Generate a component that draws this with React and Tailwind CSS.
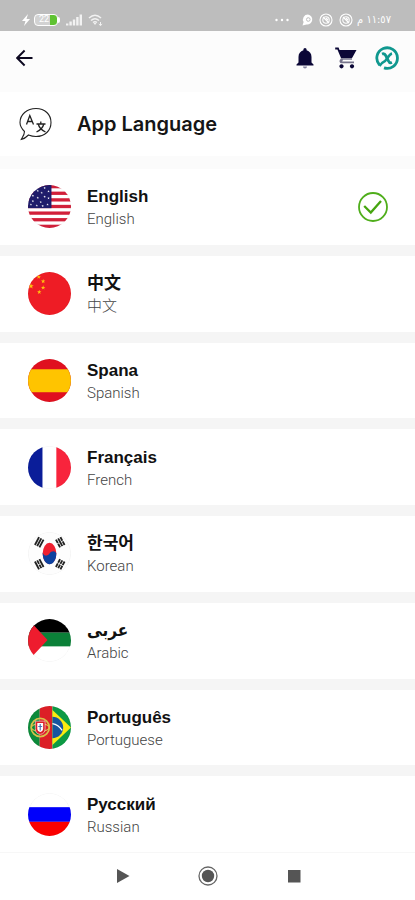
import React, { useState } from 'react';

const languages = [
  { code: 'us', name: 'English', label: 'English' },
  { code: 'cn', name: '中文', label: '中文' },
  { code: 'es', name: 'Spana', label: 'Spanish' },
  { code: 'fr', name: 'Français', label: 'French' },
  { code: 'kr', name: '한국어', label: 'Korean' },
  { code: 'ps', name: 'عربى', label: 'Arabic' },
  { code: 'pt', name: 'Português', label: 'Portuguese' },
  { code: 'ru', name: 'Русский', label: 'Russian' },
];

const STAR = 'M0 -1 L.24 -.31 L.95 -.31 L.38 .12 L.59 .81 L0 .4 L-.59 .81 L-.38 .12 L-.95 -.31 L-.24 -.31 Z';

const Star = ({ x, y, r, fill }) => (
  <path d={STAR} fill={fill} transform={`translate(${x} ${y}) scale(${r})`} />
);

const UsFlag = () => (
  <>
    <rect width="44" height="44" fill="#fff" />
    {[0, 1, 2, 3, 4, 5, 6].map((i) => (
      <rect key={i} y={i * 6.77} width="44" height="3.38" fill="#d2203a" />
    ))}
    <rect width="24" height="23.7" fill="#1f1c6b" />
    {[
      [17, 3], [10, 6], [21, 6.5], [14, 8], [5, 11], [10, 13], [17, 12],
      [21, 13.5], [5, 16.5], [13, 17.5], [20, 20], [9, 21], [3, 20], [15, 21.5],
    ].map(([x, y]) => (
      <Star key={`${x}-${y}`} x={x} y={y} r={1.3} fill="#fff" />
    ))}
  </>
);

const CnFlag = () => (
  <>
    <rect width="44" height="44" fill="#ee1c25" />
    <Star x={3} y={14.5} r={3} fill="#ffc20e" />
    <Star x={11} y={5} r={2.4} fill="#ffc20e" />
    <Star x={15.5} y={9.5} r={2.4} fill="#ffc20e" />
    <Star x={15.5} y={16} r={2.4} fill="#ffc20e" />
    <Star x={11.5} y={20.5} r={2.4} fill="#ffc20e" />
  </>
);

const EsFlag = () => (
  <>
    <rect width="44" height="44" fill="#e0101f" />
    <rect y="10.5" width="44" height="23.5" fill="#ffc400" />
  </>
);

const FrFlag = () => (
  <>
    <rect width="44" height="44" fill="#fff" />
    <rect width="14.8" height="44" fill="#0a1d99" />
    <rect x="29" width="15" height="44" fill="#f8243c" />
  </>
);

const Trigram = ({ x, y, angle, broken }) => (
  <g transform={`translate(${x} ${y}) rotate(${angle})`} stroke="#222" strokeWidth="1.9">
    {[-2.6, 0, 2.6].map((dy, i) => (
      <path key={dy} d={broken.includes(i) ? `M-4.5 ${dy} H-.4 M.4 ${dy} H4.5` : `M-4.5 ${dy} H4.5`} />
    ))}
  </g>
);

const KrFlag = () => (
  <>
    <rect width="44" height="44" fill="#fdfdfd" />
    <ellipse cx="22" cy="22" rx="7" ry="11" fill="#ee1f2f" />
    <path d="M15 21 C16 25 20 25 22 22 S28 19 29 22 C29 28 26 33 22 33 S15 28 15 21 Z" fill="#0c419f" />
    <Trigram x={11.5} y={10.5} angle={-62} broken={[]} />
    <Trigram x={33} y={10.5} angle={62} broken={[0, 2]} />
    <Trigram x={11.5} y={33} angle={62} broken={[1]} />
    <Trigram x={33} y={33} angle={-62} broken={[0, 1, 2]} />
  </>
);

const PsFlag = () => (
  <>
    <rect width="44" height="44" fill="#fff" />
    <rect width="44" height="14" fill="#000" />
    <rect y="14" width="44" height="14" fill="#0b8038" />
    <path d="M0 0 L20 21.5 L0 43 Z" fill="#ee1c2e" />
  </>
);

const PtFlag = () => (
  <>
    <rect width="12" height="44" fill="#0c8a3a" />
    <rect x="12" width="13" height="44" fill="#dc1f26" />
    <rect x="25" width="19" height="44" fill="#0c9a44" />
    <path d="M25 4 L44 22 L25 40 Z" fill="#fbea10" />
    <path d="M25 11 A11 11 0 0 1 25 33 Z" fill="#17559f" />
    <path d="M25 18 Q31 19 35 25" fill="none" stroke="#fff" strokeWidth="1.4" />
    <circle cx="12.5" cy="22" r="9.3" fill="none" stroke="#d9c04a" strokeWidth="1.8" />
    <ellipse cx="12.5" cy="22" rx="9" ry="4" fill="none" stroke="#d9c04a" strokeWidth="1.1" />
    <path d="M7.5 15.5 H17.5 V23 Q17.5 28.5 12.5 29 Q7.5 28.5 7.5 23 Z" fill="#dc1f26" stroke="#f3d8d8" strokeWidth=".7" />
    <path d="M9.5 17.5 H15.5 V23 Q15.5 26 12.5 26.5 Q9.5 26 9.5 23 Z" fill="#fff" />
    <path d="M12.5 18.5 V25 M10.5 21 H14.5" stroke="#4d74b5" strokeWidth="1.2" />
  </>
);

const RuFlag = () => (
  <>
    <rect width="44" height="44" fill="#fff" />
    <rect y="14.5" width="44" height="15" fill="#0000fb" />
    <rect y="29.5" width="44" height="15" fill="#fb0000" />
  </>
);

const flags = {
  us: UsFlag,
  cn: CnFlag,
  es: EsFlag,
  fr: FrFlag,
  kr: KrFlag,
  ps: PsFlag,
  pt: PtFlag,
  ru: RuFlag,
};

const Flag = ({ code }) => {
  const Art = flags[code];
  return (
    <svg viewBox="0 0 44 44" className="w-[43px] h-[43px] shrink-0 rounded-full" aria-hidden="true">
      <Art />
      <circle cx="22" cy="22" r="21.7" fill="none" stroke="#000" strokeOpacity=".07" strokeWidth=".6" />
    </svg>
  );
};

const Headphone = () => (
  <svg viewBox="0 0 14 14" className="w-3.5 h-3.5" fill="none" stroke="#fff" strokeWidth="1.1" aria-hidden="true">
    <circle cx="7" cy="7" r="6" />
    <circle cx="7" cy="7" r="3.2" />
    <path d="M4 4 L10 10 M7 5 L9 7" />
  </svg>
);

const StatusBar = () => (
  <div className="flex h-[31px] items-center justify-between bg-[#bdbdbd] pl-[22px] pr-6 pt-2">
    <div className="flex items-center gap-1">
      <svg viewBox="0 0 8 12" className="w-2 h-3" fill="#fff" aria-hidden="true">
        <path d="M6 0 L0 7 H3.5 L2 12 L8 5 H4.5 Z" />
      </svg>
      <div className="flex items-center">
        <div className="flex h-3 w-6 items-center justify-end rounded-sm border border-white bg-[linear-gradient(to_right,#d2d2d2_66%,#5fc232_66%)]">
          <span className="w-full pl-1 font-[Roboto] text-[9px] leading-none text-white">22</span>
        </div>
        <div className="h-1.5 w-0.5 rounded-r-sm bg-white"></div>
      </div>
      <svg viewBox="0 0 16 11" className="ml-0.5 w-4 h-3" fill="#f2f2f2" aria-hidden="true">
        <path d="M0 9 H2.4 V11 H0Z M3.4 7 H5.8 V11 H3.4Z M6.8 5 H9.2 V11 H6.8Z M10.2 2.5 H12.6 V11 H10.2Z M13.6 0 H16 V11 H13.6Z" />
      </svg>
      <svg viewBox="0 0 16 12" className="ml-0.5 w-4 h-3" fill="none" stroke="#f2f2f2" strokeWidth="1.5" aria-hidden="true">
        <path d="M1 4 Q7 -1.5 13 4 M3 6.5 Q7 3 11 6.5 M5 8.5 Q7 7 9 8.5" />
        <path d="M7 11 L5.5 9 H8.5 Z" fill="#f2f2f2" stroke="none" />
        <path d="M12.5 8 V11.5 M10.8 10 L12.5 11.6 L14.2 10" strokeWidth="1" />
      </svg>
    </div>
    <div className="flex items-center gap-1">
      <svg viewBox="0 0 14 4" className="mr-2 w-3.5 h-1" fill="#fff" aria-hidden="true">
        <circle cx="1.5" cy="2" r="1.2" />
        <circle cx="7" cy="2" r="1.2" />
        <circle cx="12.5" cy="2" r="1.2" />
      </svg>
      <svg viewBox="0 0 14 14" className="w-3.5 h-3.5" aria-hidden="true">
        <path d="M7 1.5 A5 5 0 1 1 5.5 11.4 L1.5 12.5 L2.6 9 A5 5 0 0 1 7 1.5Z" fill="#fff" />
        <circle cx="7.3" cy="6.5" r="1.8" fill="none" stroke="#bdbdbd" />
      </svg>
      <div className="flex gap-1.5">
        <Headphone />
        <Headphone />
      </div>
      <span dir="rtl" className="font-['DejaVu_Sans_Condensed','DejaVu_Sans',sans-serif] text-[11px] leading-4 text-white">١١:٥٧ م</span>
    </div>
  </div>
);

const Header = () => (
  <header className="flex h-[61px] items-center justify-between bg-[#fcfcfc] px-4 pb-2">
    <button type="button" aria-label="Back">
      <svg viewBox="0 0 18 18" className="w-[18px] h-[18px]" fill="none" stroke="#0c0820" strokeWidth="1.9" aria-hidden="true">
        <path d="M16.5 9 H1.5 M8.6 1.5 L1.2 9 L8.6 16.5" />
      </svg>
    </button>
    <div className="flex items-center gap-[17px]">
      <button type="button" aria-label="Notifications">
        <svg viewBox="0 0 24 24" className="w-6 h-6" fill="#0b0736" aria-hidden="true">
          <path d="M12 22.5 c1.1 0 2-.9 2-2 h-4 c0 1.1.9 2 2 2z" fill="#8583a0" />
          <path d="M18.5 16.5 v-5.5 c0-3.3-1.8-6-4.9-6.7 V3.5 a1.6 1.6 0 0 0-3.2 0 v.8 C7.3 5 5.5 7.7 5.5 11 v5.5 l-2 1.900 v1.200 h17 v-1.200z" />
        </svg>
      </button>
      <button type="button" aria-label="Cart">
        <svg viewBox="0 0 24 24" className="w-6 h-6" fill="#0b0736" aria-hidden="true">
          <path d="M7.5 18.2 a2.1 2.1 0 1 0 .01 0z M18 18.2 a2.1 2.1 0 1 0 .01 0z" />
          <path d="M1.2 1.5 v2 h2.2 l3.7 8.8 h9.6 c.8 0 1.5-.5 1.8-1.1 L22.500 4.100 H5.500 L4.600 1.500z" />
          <path d="M7 12.300 L5.700 14.200 C5 15.600 6 17.200 7.500 17.200 H20 V15.500 H8.200 L9 13.800 H18 V12.300z" fill="#77758c" />
        </svg>
      </button>
      <button type="button" aria-label="Account">
        <svg viewBox="0 0 24 24" className="w-6 h-6" fill="none" stroke="#10988f" aria-hidden="true">
          <path d="M4.500 19 A10.300 10.300 0 1 1 9 21.900" strokeWidth="2.800" />
          <path d="M7 8 Q9.500 7 11 10 L13.500 15 Q14.500 17.500 17 16.500" strokeWidth="2.800" />
          <path d="M17 7.500 Q15 8 12.500 12 T7 17 L4.500 20" strokeWidth="2.400" />
        </svg>
      </button>
    </div>
  </header>
);

const LanguageIcon = () => (
  <svg viewBox="0 0 34 34" className="w-[34px] h-[34px]" fill="none" stroke="#222" strokeWidth="1.1" aria-hidden="true">
    <path d="M5.5 24.5 C2.5 21.5 1 18.5 1 15.5 C1 7.5 8 1.5 17 1.5 S32 7.500 32 15.500 S26 29.500 17 29.500 C14.500 29.500 12 29 9.500 28 C7.500 30 5 32 2.200 32.500 C2.500 31.500 5.500 28.500 5.500 24.500 Z" />
    <path d="M7.500 17.500 L10.800 8.500 L14.500 17.500 M8.600 14.500 H13.300" strokeWidth="1.300" />
    <path d="M17.500 17 H26.500 M21.800 14.500 V17 M24.800 17 C24 20.500 21.500 23 17.500 25 M19.300 17 C20 20.500 22.500 23 26.500 25" strokeWidth="1.300" />
  </svg>
);

const CheckMark = () => (
  <svg viewBox="0 0 30 30" className="ml-auto w-[30px] h-[30px] shrink-0" aria-hidden="true">
    <circle cx="15" cy="15" r="14" fill="none" stroke="#4fae1b" strokeWidth="1.8" />
    <path d="M6.200 14 L12.800 20.500 L23 9" fill="none" stroke="#45a50f" strokeWidth="2.300" />
  </svg>
);

const LanguageRow = ({ language, selected, onSelect }) => (
  <li className="flex flex-1 bg-white">
    <button
      type="button"
      aria-pressed={selected}
      onClick={onSelect}
      className="flex w-full items-center gap-4 pl-7 pr-[27px] text-left"
    >
      <Flag code={language.code} />
      <span className="flex flex-col pt-0.5">
        <span className="h-[23px] font-['Liberation_Sans','Noto_Sans_CJK_SC','DejaVu_Sans_Condensed','DejaVu_Sans',sans-serif] text-[17px] leading-[23px] font-bold text-[#111]">
          {language.name}
        </span>
        <span className="h-[22px] font-[Roboto,'Noto_Sans_CJK_SC',sans-serif] text-[15px] leading-[22px] font-light text-[#444]">
          {language.label}
        </span>
      </span>
      {selected && <CheckMark />}
    </button>
  </li>
);

const NavBar = () => (
  <nav className="flex h-12 items-center justify-center gap-[66px] border-t border-[#f7f7f7] bg-white pb-0.5">
    <button type="button" aria-label="Back">
      <svg viewBox="0 0 20 20" className="w-5 h-5" aria-hidden="true">
        <path d="M5 3 L17.500 10 L5 17 Z" fill="#555" />
      </svg>
    </button>
    <button type="button" aria-label="Home">
      <svg viewBox="0 0 20 20" className="w-5 h-5" aria-hidden="true">
        <circle cx="10" cy="10" r="9" fill="none" stroke="#666" strokeWidth="1.3" />
        <circle cx="10" cy="10" r="6.2" fill="#555" />
      </svg>
    </button>
    <button type="button" aria-label="Recent apps">
      <svg viewBox="0 0 20 20" className="w-5 h-5" aria-hidden="true">
        <rect x="4" y="4" width="12.5" height="12.5" fill="#555" />
      </svg>
    </button>
  </nav>
);

export default function App() {
  const [selected, setSelected] = useState('us');

  return (
    <div className="flex min-h-screen flex-col bg-white">
      <StatusBar />
      <Header />
      <main className="flex flex-1 flex-col">
        <div className="flex h-16 items-center gap-6 bg-white px-[19px]">
          <LanguageIcon />
          <h1 className="font-[Inter,sans-serif] text-xl font-semibold text-[#151515]">App Language</h1>
        </div>
        <ul className="flex flex-1 flex-col gap-[11px] border-t-[13px] border-[#fbfbfb] bg-[#f5f5f5]">
          {languages.map((language) => (
            <LanguageRow
              key={language.code}
              language={language}
              selected={selected === language.code}
              onSelect={() => setSelected(language.code)}
            />
          ))}
        </ul>
      </main>
      <NavBar />
    </div>
  );
}
